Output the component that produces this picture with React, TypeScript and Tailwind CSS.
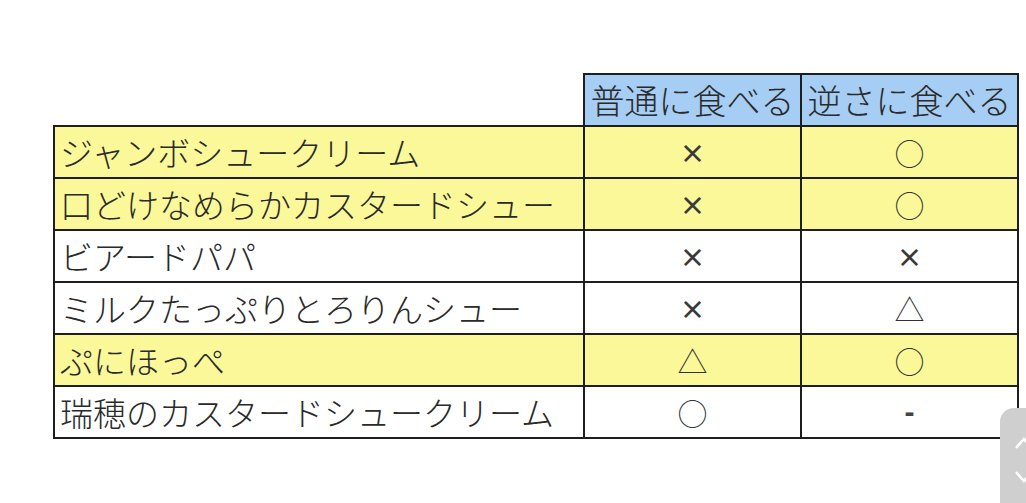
import React from "react";

const FONT = { fontFamily: '"Noto Sans CJK JP", "Noto Sans", sans-serif' };

type Row = { name: string; a: string; b: string; yellow: boolean };

const rows: Row[] = [
  { name: "ジャンボシュークリーム", a: "×", b: "○", yellow: true },
  { name: "口どけなめらかカスタードシュー", a: "×", b: "○", yellow: true },
  { name: "ビアードパパ", a: "×", b: "×", yellow: false },
  { name: "ミルクたっぷりとろりんシュー", a: "×", b: "△", yellow: false },
  { name: "ぷにほっぺ", a: "△", b: "○", yellow: true },
  { name: "瑞穂のカスタードシュークリーム", a: "○", b: "-", yellow: false },
];

function Mark({ v }: { v: string }) {
  if (v === "×") return <span className="text-[26px] font-semibold text-[#3a3a3a]">×</span>;
  if (v === "-")
    return <span className="text-[30px] font-bold text-[#444]" style={{ fontFamily: '"Liberation Sans", sans-serif' }}>-</span>;
  return <span className="text-[30px] font-light text-[#333]">{v}</span>;
}

export default function App() {
  return (
    <div className="relative w-[1026px] h-[503px] overflow-hidden bg-white" style={FONT}>
      <div className="pt-[73px] pl-[53px]">
        <table className="border-collapse table-fixed">
          <colgroup>
            <col className="w-[530px]" />
            <col className="w-[217px]" />
            <col className="w-[217px]" />
          </colgroup>
          <thead>
            <tr className="h-[52px]">
              <th className="p-0"></th>
              <th className="border-2 border-[#1e1e1e] bg-[#a6cdf3] p-0 text-[34px] font-light text-[#2a2a2a] leading-none whitespace-nowrap">
                普通に食べる
              </th>
              <th className="border-2 border-[#1e1e1e] bg-[#a6cdf3] p-0 text-[34px] font-light text-[#2a2a2a] leading-none whitespace-nowrap">
                逆さに食べる
              </th>
            </tr>
          </thead>
          <tbody>
            {rows.map((r, i) => (
              <tr key={i} className={`h-[52px] ${r.yellow ? "bg-[#fbf89a]" : "bg-white"}`}>
                <td className="border-2 border-[#1e1e1e] pl-[5px] text-left text-[33px] font-light text-[#2a2a2a] leading-none whitespace-nowrap">
                  {r.name}
                </td>
                <td className="border-2 border-[#1e1e1e] text-center leading-none">
                  <Mark v={r.a} />
                </td>
                <td className="border-2 border-[#1e1e1e] text-center leading-none">
                  <Mark v={r.b} />
                </td>
              </tr>
            ))}
          </tbody>
        </table>
      </div>
      <div className="absolute left-[1000px] top-[408px] w-[40px] h-[110px] rounded-[14px] bg-[#cfcfcf]">
        <svg className="absolute left-[14px] top-[28px]" width="20" height="14" viewBox="0 0 20 14">
          <path d="M2 12 L10 3 L18 12" fill="none" stroke="white" strokeWidth="2.5" />
        </svg>
        <svg className="absolute left-[14px] top-[62px]" width="20" height="14" viewBox="0 0 20 14">
          <path d="M2 2 L10 11 L18 2" fill="none" stroke="white" strokeWidth="2.5" />
        </svg>
      </div>
    </div>
  );
}
